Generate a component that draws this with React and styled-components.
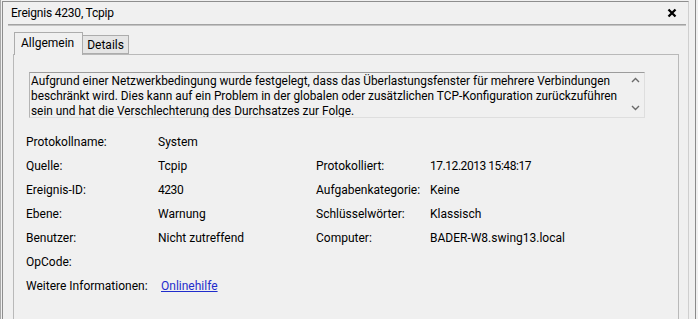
import React from 'react';
import styled, { createGlobalStyle } from 'styled-components';

const GlobalStyle = createGlobalStyle`
    html, body {
        margin: 0;
        padding: 0;
        background: #f0f0f0;
    }
    * {
        box-sizing: border-box;
    }
`;

const Window = styled.div`
    width: 698px;
    height: 319px;
    overflow: hidden;
    display: flex;
    background: #f0f0f0;
    border-left: 1px solid #a8a8a8;
    font-family: "Segoe UI", Roboto, "Liberation Sans", sans-serif;
    font-size: 12px;
    color: #000;
`;

const Frame = styled.div`
    margin: 1px 0 0 1px;
    width: 687px;
    flex: none;
    display: flex;
    flex-direction: column;
    border-top: 1px solid #8e8e8e;
    border-left: 1px solid #8e8e8e;
    border-right: 1px solid #cfcfcf;
`;

const Edge = styled.div`
    flex: 1;
    display: flex;
    padding-left: 6px;

    &::before {
        content: '';
        width: 1px;
        background: #8a8a8a;
    }
`;

const TitleBar = styled.div`
    height: 22px;
    display: flex;
    align-items: center;
    justify-content: space-between;
    padding: 0 10px 0 8px;
    letter-spacing: -0.2px;
`;

const Separator = styled.div`
    height: 2px;
    margin: 0 2px 0 5px;
    background: #a3a3a3;
    border-bottom: 1px solid #c4c4c4;
`;

const CloseButton = styled.button`
    border: none;
    background: transparent;
    padding: 0;
    width: 12px;
    height: 12px;
    display: flex;
    align-items: center;
    justify-content: center;
`;

const TabStrip = styled.div`
    margin: 6px 9px 0 10px;
    height: 22px;
    display: flex;
    align-items: flex-end;
    padding-left: 1px;
`;

const Tab = styled.div`
    position: relative;
    z-index: ${p => (p.$active ? 1 : 0)};
    height: ${p => (p.$active ? '23px' : '19px')};
    margin-bottom: ${p => (p.$active ? '-1px' : '0')};
    padding: ${p => (p.$active ? '0 8px 2px 6px' : '0 4px 0 4px')};
    display: flex;
    align-items: center;
    background: ${p => (p.$active ? '#f0f0f0' : '#e5e5e5')};
    border: 1px solid #acacac;
    border-bottom: ${p => (p.$active ? 'none' : '1px solid #acacac')};
    border-left: ${p => (p.$active ? '1px solid #acacac' : 'none')};
`;

const Panel = styled.div`
    flex: 1;
    margin: 0 9px 0 10px;
    border: 1px solid #b9b9b9;
    border-bottom: none;
    padding: 17px 0 0 12px;
`;

const DescriptionBox = styled.div`
    margin-left: 3px;
    width: 616px;
    height: 46px;
    display: flex;
    border-top: 1px solid #9c9c9c;
    border-left: 1px solid #b4b4b4;
    border-right: 1px solid #dedede;
    border-bottom: 1px solid #dedede;
`;

const DescriptionText = styled.div`
    flex: 1;
    overflow: hidden;
    padding: 1px 0 0 1px;
    line-height: 15px;
    font-size: 11.85px;
    white-space: nowrap;
`;

const ScrollBar = styled.div`
    width: 17px;
    display: flex;
    flex-direction: column;
    justify-content: space-between;
    align-items: center;
    padding: 4px 0 6px;
`;

const Fields = styled.div`
    margin-top: 12px;
    display: grid;
    grid-template-columns: 132px 158px 114px auto;
    grid-auto-rows: 24px;
    align-items: center;
`;

const Label = styled.div`
    white-space: nowrap;
`;

const Value = styled.div`
    white-space: nowrap;
    letter-spacing: ${p => (p.$numeric ? '-0.45px' : '0')};
`;

const HelpLink = styled.a`
    margin-left: 3px;
    color: #1f2ccc;
    text-decoration: underline;
    cursor: pointer;
`;

const Chevron = ({ up }) => (
    <svg width="9" height="6" viewBox="0 0 9 6">
        <path
            d={up ? 'M1 5 L4.5 1.5 L8 5' : 'M1 1 L4.5 4.5 L8 1'}
            fill="none"
            stroke="#6a6a6a"
            strokeWidth="1.4"
        />
    </svg>
);

const rows = [
    ['Protokollname:', 'System', '', ''],
    ['Quelle:', 'Tcpip', 'Protokolliert:', '17.12.2013 15:48:17'],
    ['Ereignis-ID:', '4230', 'Aufgabenkategorie:', 'Keine'],
    ['Ebene:', 'Warnung', 'Schlüsselwörter:', 'Klassisch'],
    ['Benutzer:', 'Nicht zutreffend', 'Computer:', 'BADER-W8.swing13.local'],
    ['OpCode:', '', '', ''],
];

const isNumeric = text => /^[\d.: ]+$/.test(text);

const App = () => {
    return (
        <>
            <GlobalStyle />
            <Window>
                <Frame>
                    <TitleBar>
                        <span>Ereignis 4230, Tcpip</span>
                        <CloseButton aria-label="Schließen">
                            <svg width="10" height="10" viewBox="0 0 10 10">
                                <path d="M1.5 1.5 L8.5 8.5 M8.5 1.5 L1.5 8.5" stroke="#000" strokeWidth="2.3" />
                            </svg>
                        </CloseButton>
                    </TitleBar>
                    <Separator />
                    <TabStrip>
                        <Tab $active>Allgemein</Tab>
                        <Tab>Details</Tab>
                    </TabStrip>
                    <Panel>
                        <DescriptionBox>
                            <DescriptionText>
                                Aufgrund einer Netzwerkbedingung wurde festgelegt, dass das Überlastungsfenster für mehrere Verbindungen
                                <br />
                                beschränkt wird. Dies kann auf ein Problem in der globalen oder zusätzlichen TCP-Konfiguration zurückzuführen
                                <br />
                                sein und hat die Verschlechterung des Durchsatzes zur Folge.
                            </DescriptionText>
                            <ScrollBar>
                                <Chevron up />
                                <Chevron />
                            </ScrollBar>
                        </DescriptionBox>
                        <Fields>
                            {rows.map((r, i) => (
                                <React.Fragment key={i}>
                                    <Label>{r[0]}</Label>
                                    <Value $numeric={isNumeric(r[1])}>{r[1]}</Value>
                                    <Label>{r[2]}</Label>
                                    <Value $numeric={isNumeric(r[3])}>{r[3]}</Value>
                                </React.Fragment>
                            ))}
                            <Label>Weitere Informationen:</Label>
                            <Value>
                                <HelpLink>Onlinehilfe</HelpLink>
                            </Value>
                        </Fields>
                    </Panel>
                </Frame>
                <Edge />
            </Window>
        </>
    );
};

export default App;
